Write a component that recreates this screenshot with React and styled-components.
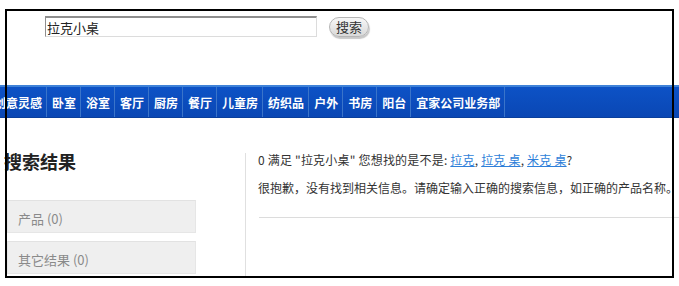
import React from "react";
import styled, { createGlobalStyle } from "styled-components";

const navItems = [
  "创意灵感",
  "卧室",
  "浴室",
  "客厅",
  "厨房",
  "餐厅",
  "儿童房",
  "纺织品",
  "户外",
  "书房",
  "阳台",
  "宜家公司业务部",
];

const GlobalStyle = createGlobalStyle`
  body {
    margin: 0;
    background: #fff;
    font-family: "Noto Sans CJK SC", "Liberation Sans", sans-serif;
    overflow: hidden;
  }
`;

const App = () => {
  return (
    <Page>
      <GlobalStyle />
      <Frame />
      <SearchBar>
        <SearchInput defaultValue="拉克小桌" />
        <SearchButton>搜索</SearchButton>
      </SearchBar>
      <Nav>
        <NavList>
          {navItems.map((item) => (
            <NavItem key={item}>{item}</NavItem>
          ))}
        </NavList>
      </Nav>
      <Main>
        <Sidebar>
          <Heading>搜索结果</Heading>
          <Facet>产品 (0)</Facet>
          <Facet>其它结果 (0)</Facet>
        </Sidebar>
        <Results>
          <Suggest>
            0 满足 "拉克小桌" 您想找的是不是: <Link href="#">拉克</Link>,{" "}
            <Link href="#">拉克 桌</Link>, <Link href="#">米克 桌</Link>?
          </Suggest>
          <Sorry>
            很抱歉，没有找到相关信息。请确定输入正确的搜索信息，如正确的产品名称。
          </Sorry>
          <Rule />
        </Results>
      </Main>
    </Page>
  );
};

const Page = styled.div`
  position: relative;
  width: 679px;
  height: 278px;
  overflow: hidden;
`;

const Frame = styled.div`
  position: absolute;
  top: 9px;
  left: 5px;
  right: 5px;
  bottom: 0;
  border: 2px solid #000;
  pointer-events: none;
  z-index: 2;
`;

const SearchBar = styled.div`
  display: flex;
  align-items: center;
  gap: 12px;
  padding: 16px 0 0 45px;
  height: 21px;
`;

const SearchInput = styled.input`
  box-sizing: border-box;
  width: 272px;
  height: 21px;
  margin: 0;
  padding: 0 1px;
  border: 1px solid;
  border-top-width: 2px;
  border-color: #8e8e8e #dcdcdc #dcdcdc #8e8e8e;
  font-family: "Noto Sans CJK SC", sans-serif;
  font-size: 13px;
  color: #222;
  outline: none;
`;

const SearchButton = styled.button`
  box-sizing: border-box;
  width: 40px;
  height: 20px;
  padding: 0;
  border: 1px solid #b5b5b5;
  border-radius: 10px;
  background: linear-gradient(#f7f7f7, #d9d9d9);
  box-shadow: 1px 2px 1px #c8c8c8;
  font-family: "Noto Sans CJK SC", sans-serif;
  font-size: 13px;
  line-height: 18px;
  color: #333;
`;

const Nav = styled.nav`
  position: relative;
  z-index: 1;
  margin-top: 48px;
  height: 33px;
  box-sizing: border-box;
  background: linear-gradient(#0d52c6, #0a47b4);
  border-top: 2px solid #3f82d8;
  border-bottom: 1px solid #0a3f9c;
`;

const NavList = styled.ul`
  list-style: none;
  display: flex;
  margin: 0 0 0 -11px;
  padding: 0;
  height: 100%;
  white-space: nowrap;
`;

const NavItem = styled.li`
  display: flex;
  align-items: center;
  padding: 0 4px 0 5px;
  border-right: 1px solid #3a74c9;
  font-size: 12px;
  font-weight: bold;
  color: #fff;
`;

const Main = styled.div`
  display: flex;
  padding-top: 35px;
`;

const Sidebar = styled.div`
  width: 241px;
  flex-shrink: 0;
  padding-left: 4px;
`;

const Heading = styled.h2`
  margin: -2px 0 29px;
  font-size: 18px;
  line-height: 20px;
  font-weight: bold;
  color: #222;
`;

const Facet = styled.div`
  box-sizing: border-box;
  width: 189px;
  height: 33px;
  margin: 0 0 8px 3px;
  padding: 4px 0 0 10px;
  display: flex;
  align-items: center;
  background: #efefef;
  border: 1px solid #e6e6e6;
  border-top-color: #e2e2e2;
  font-size: 13px;
  color: #8a8a8a;
`;

const Results = styled.div`
  flex: 1;
  border-left: 1px solid #e0e0e0;
  padding-left: 12px;
  margin-right: -40px;
  white-space: nowrap;
  font-size: 12px;
  color: #333;
`;

const Suggest = styled.p`
  margin: -3px 0 0;
  line-height: 20px;
  letter-spacing: 0.2px;
`;

const Link = styled.a`
  color: #2f7fd9;
  text-decoration: underline;
`;

const Sorry = styled.p`
  margin: 8px 0 0;
  line-height: 20px;
`;

const Rule = styled.div`
  margin: 19px 0 0 1px;
  height: 1px;
  background: #dcdcdc;
`;

export default App;
